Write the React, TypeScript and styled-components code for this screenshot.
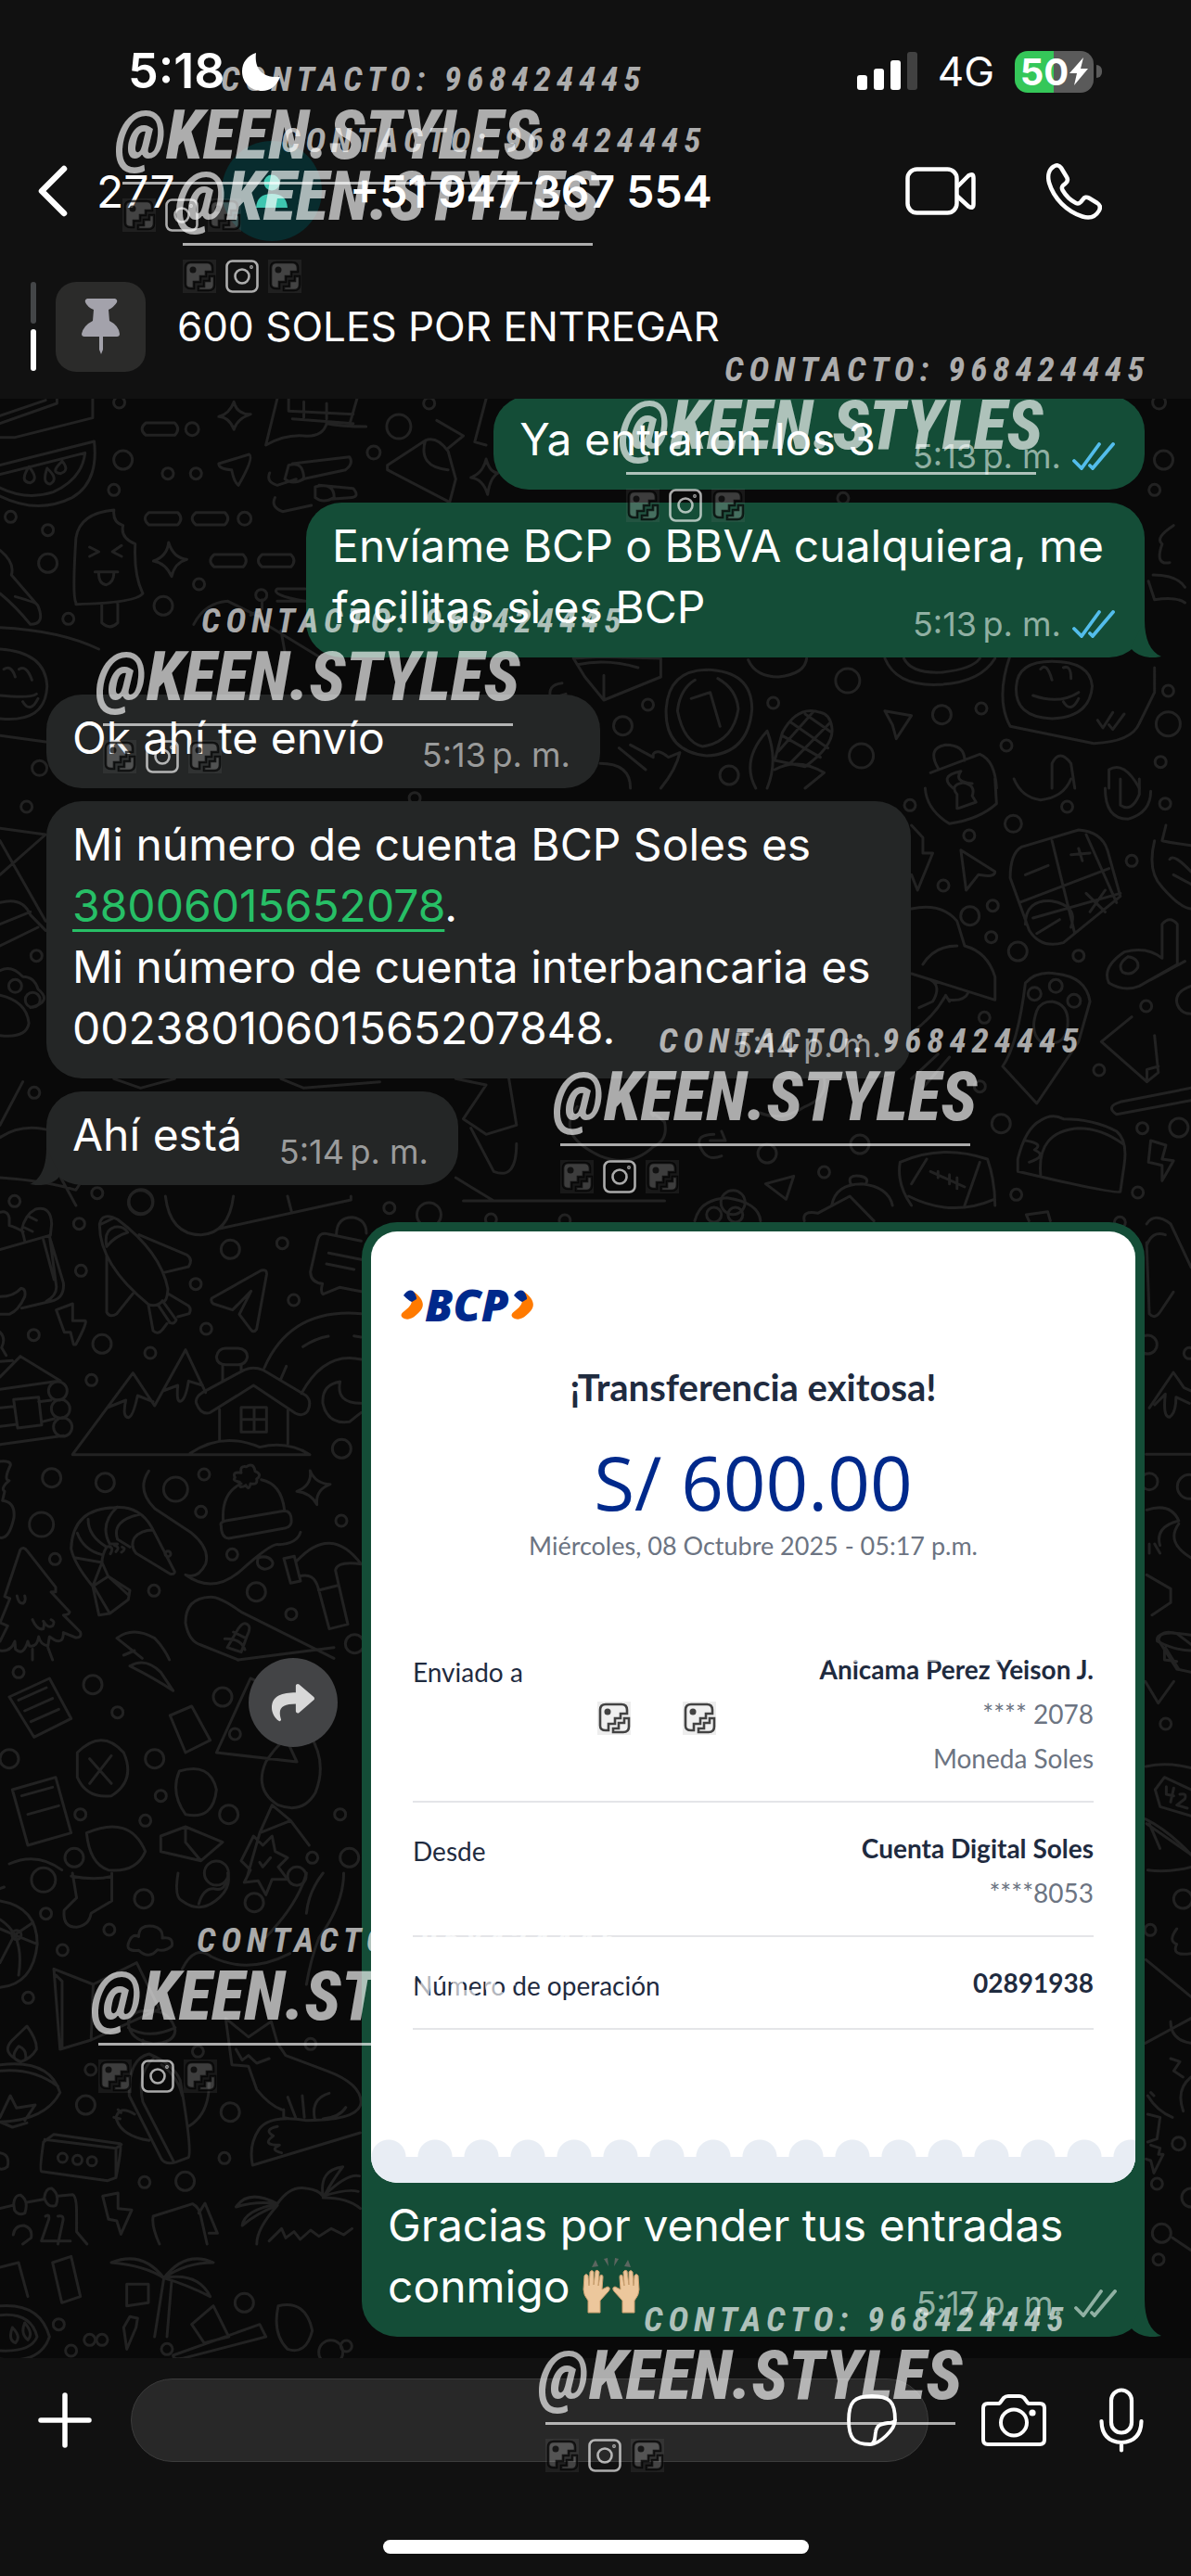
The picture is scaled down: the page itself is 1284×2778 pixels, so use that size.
import React from "react";
import styled, { createGlobalStyle } from "styled-components";
import { FaShare } from "react-icons/fa";

const ui = `Inter, "Liberation Sans", sans-serif`;
const receiptFont = `Lato, "Open Sans", sans-serif`;
const stampFont = `"Roboto Condensed", "Liberation Sans Narrow", "DejaVu Sans Condensed", sans-serif`;

const Global = createGlobalStyle`
  * { box-sizing: border-box; }
  body { margin: 0; background: #111; }
  button, input { font: inherit; color: inherit; background: none; border: 0; padding: 0; }
  svg { display: block; }
`;

const Screen = styled.main`
  position: relative;
  display: flex;
  flex-direction: column;
  width: 100%;
  height: 100vh;
  overflow: hidden;
  background: #111;
  color: #fff;
  font-family: ${ui};
`;

/* ---------- status bar ---------- */
const StatusBar = styled.header`
  display: flex;
  align-items: center;
  padding: 46px 96px 0 138px;
  height: 108px;
`;
const Clock = styled.time`
  font-size: 52px;
  font-weight: 600;
  line-height: 64px;
`;
const Moon = styled.svg`
  margin-left: 18px;
`;
const StatusRight = styled.div`
  display: flex;
  align-items: center;
  gap: 22px;
  margin-left: auto;
`;
const Network = styled.span`
  font-size: 44px;
  line-height: 60px;
`;
const Battery = styled.span`
  display: flex;
  align-items: center;
  gap: 3px;
`;
const BatteryBody = styled.span`
  display: flex;
  align-items: center;
  justify-content: center;
  gap: 1px;
  width: 85px;
  height: 45px;
  border-radius: 14px;
  background: linear-gradient(90deg, #35c759 50%, #5a5a5a 50%);
  font-size: 40px;
  font-weight: 700;
`;
const BatteryTip = styled.span`
  width: 6px;
  height: 14px;
  border-radius: 0 7px 7px 0;
  background: #5a5a5a;
`;

/* ---------- contact bar ---------- */
const ContactBar = styled.nav`
  display: flex;
  align-items: center;
  height: 196px;
  padding: 0 96px 0 41px;
`;
const BackButton = styled.button`
  display: flex;
  align-items: center;
  gap: 31px;
  width: 198px;
  font-size: 48px;
`;
const Avatar = styled.span`
  display: grid;
  place-items: center;
  width: 108px;
  height: 108px;
  border-radius: 50%;
  background: #082c2e;
`;
const Contact = styled.h1`
  flex: 1;
  margin: 0 0 0 30px;
  font-size: 48px;
  font-weight: 600;
`;
const IconButton = styled.button`
  display: grid;
  place-items: center;
  flex: none;
`;
const Calls = styled.div`
  display: flex;
  align-items: center;
  gap: 76px;
`;

/* ---------- pinned message ---------- */
const Pinned = styled.section`
  display: flex;
  align-items: center;
  height: 126px;
  padding: 0 33px 30px;
`;
const PinSteps = styled.div`
  display: grid;
  gap: 6px;
`;
const PinStep = styled.span<{ $on?: boolean }>`
  width: 6px;
  height: 45px;
  border-radius: 3px;
  background: ${(p) => (p.$on ? "#fff" : "#444648")};
`;
const PinTile = styled.span`
  display: grid;
  place-items: center;
  width: 97px;
  height: 97px;
  margin: 0 34px 0 21px;
  border-radius: 22px;
  background: #2b2b2a;
`;
const PinText = styled.p`
  margin: 0;
  font-size: 44px;
`;

/* ---------- conversation ---------- */
const Chat = styled.section`
  position: relative;
  flex: 1;
  min-height: 0;
  display: flex;
  flex-direction: column;
  justify-content: flex-end;
  gap: 14px;
  padding: 0 50px 23px;
  overflow: hidden;
  background: #090909;
`;
const Wallpaper = styled.svg`
  position: absolute;
  inset: 0;
  width: 100%;
  height: 100%;
  fill: none;
  stroke: #222;
  stroke-width: 3;
  stroke-linejoin: round;
  stroke-linecap: round;
  & * { vector-effect: non-scaling-stroke; }
`;
const Row = styled.div<{ $mine?: boolean; $turn?: boolean }>`
  position: relative;
  display: flex;
  justify-content: ${(p) => (p.$mine ? "flex-end" : "flex-start")};
  margin-top: ${(p) => (p.$turn ? "26px" : "0")};
`;
const Bubble = styled.article<{ $mine?: boolean; $stacked?: boolean }>`
  position: relative;
  display: ${(p) => (p.$stacked ? "grid" : "flex")};
  gap: 40px;
  padding: 14px 32px 21px 28px;
  border-radius: 38px;
  background: ${(p) => (p.$mine ? "#144d37" : "#242626")};
`;
const MediaBubble = styled.article`
  position: relative;
  width: 844px;
  padding: 10px;
  border-radius: 38px;
  background: #144d37;
`;
const Caption = styled.div`
  display: grid;
  padding: 13px 20px 11px 18px;
`;
const Body = styled.p<{ $stacked?: boolean }>`
  margin: 0;
  grid-area: 1 / 1;
  padding-right: ${(p) => (p.$stacked ? "12px" : "0")};
  font-size: 48px;
  line-height: 66px;
  white-space: pre-line;
`;
const AccountLink = styled.a`
  color: #27bf66;
  text-decoration: underline;
  text-decoration-thickness: 3px;
  text-underline-offset: 8px;
`;
const Meta = styled.span<{ $mine?: boolean }>`
  grid-area: 1 / 1;
  align-self: end;
  justify-self: end;
  display: flex;
  align-items: center;
  gap: 12px;
  font-size: 36px;
  line-height: 42px;
  white-space: nowrap;
  margin-bottom: -6px;
  color: ${(p) => (p.$mine ? "#90b0a3" : "#9a9b9b")};
`;
const RightTail = styled.svg`
  position: absolute;
  right: -18px;
  bottom: 0;
`;
const LeftTail = styled.svg`
  position: absolute;
  left: -18px;
  bottom: 0;
`;
const Share = styled.button`
  display: grid;
  place-items: center;
  width: 96px;
  height: 96px;
  margin: 470px 26px 0 0;
  border-radius: 50%;
  background: #434446;
  color: #d8d8d8;
  font-size: 46px;
`;

/* ---------- bank receipt ---------- */
const Receipt = styled.div`
  display: flex;
  flex-direction: column;
  height: 1026px;
  border-radius: 28px;
  overflow: hidden;
  background: #fff;
  color: #1f2b3f;
  font-family: ${receiptFont};
`;
const Logo = styled.div`
  display: flex;
  align-items: center;
  gap: 2px;
  padding: 59px 0 0 32px;
  color: #00298b;
  font: italic 800 48px/40px "Open Sans", sans-serif;
`;
const ReceiptTitle = styled.h2`
  margin: 47px 0 0;
  text-align: center;
  font-size: 40px;
  font-weight: 700;
  line-height: 44px;
`;
const Amount = styled.p`
  margin: 36px 0 0;
  text-align: center;
  color: #00298b;
  font: 400 80px/88px "Open Sans", sans-serif;
`;
const ReceiptDate = styled.p`
  margin: 7px 0 0;
  text-align: center;
  color: #6c7482;
  font-size: 27px;
  line-height: 36px;
`;
const Details = styled.dl`
  margin: 97px 45px 0;
`;
const Detail = styled.div`
  display: flex;
  justify-content: space-between;
  padding-bottom: 28px;
  margin-bottom: 31px;
  border-bottom: 2px solid #e4e5e8;
  font-size: 28px;
  line-height: 36px;
`;
const Term = styled.dt`
  padding-top: 3px;
`;
const Values = styled.dd`
  display: grid;
  gap: 12px;
  margin: 0;
  text-align: right;
  color: #6c7482;
  & > b { color: #1f2b3f; }
`;
const Scallops = styled.div`
  height: 47px;
  margin-top: auto;
  background:
    linear-gradient(#e8edf4, #e8edf4) 0 19px / 100% 28px no-repeat,
    radial-gradient(circle at 19px 19px, #e8edf4 18px, transparent 19px) 0 0 / 50px 38px repeat-x;
`;
const Emoji = styled.svg`
  display: inline-block;
  vertical-align: -12px;
`;

/* ---------- composer ---------- */
const Composer = styled.form`
  display: flex;
  align-items: center;
  padding: 22px 51px 0 41px;
`;
const Field = styled.label`
  display: flex;
  align-items: center;
  flex: 1;
  min-width: 0;
  height: 90px;
  margin: 0 57px 0 42px;
  padding: 0 33px 0 36px;
  border: 1px solid #3c3c3c;
  border-radius: 45px;
  background: #282828;
`;
const Input = styled.input`
  flex: 1;
  width: 100%;
  min-width: 0;
  outline: 0;
  font-size: 48px;
`;
const Tools = styled.div`
  display: flex;
  align-items: center;
  gap: 57px;
`;
const HomeBar = styled.div`
  width: 459px;
  height: 15px;
  margin: 84px auto 24px;
  border-radius: 8px;
  background: #fff;
`;

/* ---------- seller's stamps, scattered freely over the screen ---------- */
const StampLayer = styled.div`
  position: absolute;
  inset: 0;
  overflow: hidden;
  pointer-events: none;
`;
const StampBox = styled.div`
  position: absolute;
  width: 442px;
  color: rgba(255, 255, 255, 0.66);
  font-family: ${stampFont};
  font-style: italic;
  font-weight: 700;
  white-space: nowrap;
`;
const StampContact = styled.div`
  margin-left: 106px;
  font-size: 37px;
  line-height: 40px;
  letter-spacing: 6px;
`;
const StampName = styled.div`
  margin-left: -8px;
  font-size: 74px;
  font-weight: 800;
  line-height: 80px;
`;
const StampRule = styled.div`
  height: 3px;
  margin-top: 10px;
  background: rgba(255, 255, 255, 0.66);
`;
const StampIcons = styled.div`
  display: flex;
  gap: 10px;
  margin-top: 15px;
`;

const Broken = () => (
  <svg width="36" height="36" viewBox="0 0 36 36" fill="none">
    <rect width="36" height="36" fill="rgba(128,128,128,.14)" />
    <path
      d="M11 31H9Q3 31 3 26V9Q3 3 9 3H26Q32 3 32 9V13H25V18H19V24H12V31ZM17 33V29H23V23H29V18H34V27Q34 33 28 33Z"
      fill="rgba(255,255,255,.16)"
      stroke="rgba(0,0,0,.72)"
      strokeWidth="2.6"
    />
    <circle cx="11" cy="11" r="3.5" fill="rgba(0,0,0,.72)" />
  </svg>
);
const Camera = () => (
  <svg width="36" height="36" viewBox="0 0 36 36" fill="none" stroke="rgba(255,255,255,.66)" strokeWidth="2.6">
    <rect x="1.5" y="1.5" width="33" height="33" rx="6" />
    <circle cx="18" cy="18" r="7.5" />
    <circle cx="28" cy="8" r=".6" />
  </svg>
);
const Stamp = ({ x, y }: { x: number; y: number }) => (
  <StampBox style={{ left: x, top: y - 131 }}>
    <StampContact>CONTACTO: 968424445</StampContact>
    <StampName>@KEEN.STYLES</StampName>
    <StampRule />
    <StampIcons>
      <Broken />
      <Camera />
      <Broken />
    </StampIcons>
  </StampBox>
);
const stamps: [number, number][] = [
  [132, 197],
  [197, 263],
  [675, 510],
  [111, 781],
  [604, 1234],
  [644, 1818],
  [106, 2204],
  [588, 2613],
];

const Ticks = ({ read }: { read?: boolean }) => (
  <svg width="46" height="30" viewBox="0 0 46 30" fill="none" stroke={read ? "#53bdeb" : "#90b0a3"} strokeWidth="3.8" strokeLinecap="round">
    <path d="M2 20L10 28L29 2" />
    <path d="M19 25L22 28L44 2" />
  </svg>
);
const TailR = () => (
  <RightTail width="36" height="40" viewBox="0 0 36 40" fill="#144d37">
    <path d="M18 0C18 20 24 34 36 39C24 42 10 39 3 30Z" />
  </RightTail>
);
const TailL = () => (
  <LeftTail width="36" height="40" viewBox="0 0 36 40" fill="#242626">
    <path d="M18 0C18 20 12 34 0 39C12 42 26 39 33 30Z" />
  </LeftTail>
);
const Chevron = () => (
  <svg width="24" height="32" viewBox="0 0 24 32">
    <path d="M14 2C25 10 27 18 19 25C14 30 8 34 2 30C-1 27 1 25 5 22C10 18 12 15 12 11Z" fill="#ff7a00" />
    <path d="M3 6Q8 -1 13 1Q17 5 17 10L12 13Q9 12 3 6Z" fill="#00298b" />
  </svg>
);

/* ---------- wallpaper drawings ---------- */
type Patch = { x: number; y: number; kx: number; ky: number; d: string; dots: [number, number, number][] };
const patches: Patch[] = [
  {
    x: 0, y: 420, kx: 1.2212, ky: 3,
    d: `M0 155H20L122 92V30M0 110L75 45V30M0 85L60 35
    M0 245L124 168Q130 300 95 350Q50 405 0 345M0 275L112 205Q108 290 70 332Q35 360 0 318
    M38 250Q25 300 40 302Q52 290 38 250M62 255Q55 305 66 306Q78 290 62 255M82 232Q65 270 80 272Q92 262 82 232
    M192 108H230Q238 128 230 148H192Q182 128 192 108Z
    M196 398H234Q242 418 234 438H196Q186 418 196 398ZM258 398H296Q304 418 296 438H258Q248 418 258 398Z
    M282 534H320Q328 554 320 574H282Q272 554 282 534ZM345 534H383Q391 554 383 574H345Q335 554 345 534ZM365 645H402M365 685H402Q355 665 365 645
    M308 40Q312 82 330 80Q312 95 308 130Q302 90 288 88Q302 80 308 40ZM222 495Q228 545 246 550Q230 560 226 605Q218 562 202 555Q220 540 222 495Z
    M640 225Q645 270 656 270Q645 285 642 340Q636 290 620 285Q636 270 640 225Z
    M365 30L350 180Q375 145 400 150T430 110Q450 120 482 120M470 30L460 115M380 30V70L465 80M385 95L465 110M400 40V90M430 45V95
    M288 240L328 210Q335 220 314 310Q308 300 305 260Q288 258 288 240Z
    M355 270Q350 300 365 310L390 290M385 240L460 218Q466 240 455 260L398 290M380 245Q400 230 400 290Q385 310 375 290ZM362 350Q356 380 372 395L410 375M420 310L465 320Q475 350 460 350L435 355M415 315Q440 300 440 350Q425 370 415 350Z
    M510 245L560 165Q575 150 590 200L600 290L592 365L510 260ZM560 165Q550 250 590 260M575 100L610 150L590 190M640 30L625 170L640 180
    M100 690Q95 670 100 480Q105 400 150 390Q148 430 162 440Q158 480 178 500Q176 600 188 660Q180 690 100 695ZM134 695V755Q145 780 155 755V692M118 510L130 525L118 540M160 505L148 525L160 540M125 590H155M130 595Q130 630 140 632Q150 625 150 592
    M0 520Q20 560 15 600L50 700Q60 760 40 760Q20 700 0 660M20 670Q50 690 50 700
    M0 770Q80 780 130 840M0 840Q60 850 62 960Q60 1080 0 1065M0 1120L60 1140M5 905Q15 890 20 930M25 905Q35 890 42 940M0 990Q40 1000 48 985M30 1010Q40 1050 50 1000
    M255 760Q270 690 300 685L345 740M345 680V710L330 730M350 760L420 865M370 780L375 850M755 870L790 865L870 870V930L795 1005L770 930ZM795 925V1000M760 890Q800 870 840 900M740 950Q720 955 725 1000L745 985
    M930 907Q990 910 990 1035Q985 1180 930 1185Q875 1170 877 1035Q880 910 930 907ZM945 935Q970 970 972 1035Q965 1140 925 1155Q900 1140 892 1040Q895 970 915 940M910 1000L935 980L948 1090
    M1010 1105Q1025 1200 1010 1290M1010 1105Q975 1200 995 1290M1080 1045Q1050 1020 1030 1110L1020 1200L1060 1220Q1100 1150 1095 1090Q1092 1050 1080 1045M1040 1075L1090 1160M1030 1120L1080 1190M1060 1050L1095 1110M1070 1045L1025 1170M1092 1080L1040 1210M1020 1230Q1050 1190 1085 1240L1060 1290
    M1165 1040L1200 1055L1180 1130L1175 1085ZM985 875Q995 930 1025 930Q1060 920 1062 870M1165 870Q1180 960 1235 955Q1290 950 1310 870M1190 870Q1200 920 1240 915Q1280 905 1290 870
    M1330 860Q1310 1000 1330 1090L1440 1145Q1490 1140 1500 1080L1520 980V900M1385 880Q1435 880 1438 960Q1435 1060 1385 1065Q1335 1060 1338 960Q1340 880 1385 880M1370 905Q1378 880 1385 940M1400 900Q1410 890 1410 935M1360 990Q1395 1020 1420 980M1400 1010Q1410 1050 1420 1000M1445 1070L1452 1095L1465 1045M1460 1085L1465 1100L1480 1050
    M815 1160L850 1230M830 1150L860 1190V1180Q865 1160 880 1190L895 1175Q890 1230 870 1290M790 1210Q830 1210 830 1290M1225 1240L1290 1180Q1310 1200 1312 1290M1235 1225Q1220 1160 1245 1150Q1270 1150 1270 1200M1255 1290Q1235 1250 1265 1235Q1255 1270 1280 1275M1385 1290V1210Q1395 1160 1410 1210L1415 1290M1460 1290V1230Q1480 1200 1500 1290
    M1545 440Q1520 480 1530 500Q1520 570 1540 560M1518 600Q1550 600 1560 640M1512 620L1520 680Q1550 670 1560 690`,
    dots: [[157, 42, 6], [253, 128, 7], [162, 228, 10], [221, 272, 6], [258, 272, 6], [150, 325, 6], [14, 412, 6], [322, 418, 7], [63, 455, 6], [63, 562, 10], [262, 630, 6], [344, 665, 6], [215, 700, 10], [90, 742, 6], [492, 204, 7], [525, 120, 13], [565, 45, 6], [1526, 42, 7], [1532, 228, 10], [1520, 325, 6], [1110, 352, 6], [1116, 942, 13], [853, 1020, 6], [820, 1088, 10], [1018, 1014, 6], [1240, 1052, 10], [1292, 1032, 6], [960, 1248, 10], [1134, 1185, 13], [1325, 1152, 6], [1538, 975, 6], [1538, 1082, 13], [1528, 1205, 6], [52, 1225, 8]],
  },
  {
    x: 0, y: 840, kx: 1.2212, ky: 3,
    d: `M1218 30Q1220 100 1250 145Q1290 130 1312 80L1310 0M1260 95V50Q1250 20 1268 12Q1285 20 1280 55L1285 75L1262 95M1335 0Q1345 60 1370 68Q1400 60 1410 0M1455 30Q1455 130 1485 130Q1515 110 1515 40M1475 0V85Q1490 110 1500 50V0
    M1345 220L1420 165Q1450 170 1458 230L1475 380L1400 530Q1370 550 1355 490L1330 320Q1330 240 1345 220M1385 200L1415 500M1430 180L1470 400M1342 400L1460 290M1360 450L1475 370M1350 310L1380 280M1410 245L1435 240M1420 225L1425 265M1430 370L1455 430M1455 360L1435 430M1365 500L1395 455M1350 470Q1350 390 1385 395Q1420 410 1410 480
    M1200 150L1215 190V240H1228L1208 360L1200 310M1265 230L1310 300Q1310 320 1288 310L1272 360ZM1520 200Q1510 300 1530 350Q1555 420 1568 420M1535 150L1530 200Q1550 210 1568 215M1540 260Q1545 240 1568 300M1545 310Q1560 330 1568 340
    M1200 420Q1240 400 1260 460L1270 540Q1300 560 1310 640V715L1200 630M1215 600Q1230 540 1260 540M1210 740L1228 720Q1240 670 1225 650M1250 715Q1270 720 1275 690M1200 820Q1230 770 1245 700L1250 720
    M1530 470Q1540 440 1550 470V600L1500 670Q1480 690 1460 660Q1450 610 1480 560Q1510 540 1530 580ZM1485 575Q1500 580 1498 610Q1490 640 1478 625Q1470 600 1485 575M1560 590L1515 650M1568 670Q1545 690 1550 730Q1555 760 1568 760
    M1350 660Q1365 620 1390 630Q1430 640 1435 720L1420 850L1365 1050L1320 930Q1340 860 1350 660M1385 720Q1410 730 1405 810Q1400 870 1370 850Q1355 820 1365 750Q1370 720 1385 720
    M1490 770L1450 850L1510 980L1525 950L1520 830M1510 980V940L1525 930M1568 1000L1475 1045Q1455 1060 1470 1085L1568 1040
    M1340 1230Q1350 1130 1370 1105Q1385 1080 1400 1100Q1440 1100 1470 1140Q1485 1170 1480 1250L1475 1335Q1470 1345 1340 1270ZM1370 1280Q1365 1140 1420 1130Q1450 1130 1478 1180M1350 1170Q1375 1180 1362 1200Q1380 1220 1355 1240
    M1515 1170L1535 1185L1530 1230L1545 1235L1530 1300V1250L1512 1240Z
    M1185 1240Q1240 1180 1300 1230Q1310 1300 1310 1380M1185 1240Q1180 1310 1200 1380M1220 1230L1200 1310M1290 1240L1270 1380M1225 1270L1270 1320M1235 1290V1270M1250 1310V1280M1260 1325V1290
    M0 160L60 180M0 200L60 460M0 310L60 180M0 400Q30 380 40 440L60 490M0 470L40 430M0 540L50 480M0 620Q15 600 30 640Q45 640 50 680Q70 720 40 740M0 700Q35 720 38 790Q35 840 0 830M30 980L0 1120M0 1160Q30 1110 70 1140M0 1290Q60 1300 100 1330L105 1310M80 1290L100 1380
    M150 970L185 1000L230 970M370 970L400 1000L500 980M600 970L640 990L610 1100L640 1150L680 1120L670 970M620 1130L650 1270Q680 1300 680 1180M610 1365H875M600 1290L650 1365M760 1060Q730 1150 790 1220Q830 1260 860 1190Q880 1170 875 1110Q850 1060 860 1090M940 1150Q915 1150 922 1190Q930 1240 950 1220M950 1140L955 1170L935 1170M1000 1080Q1030 1110 1060 1060Q1090 1030 1085 970
    M1008 1310L1045 1285L1035 1360ZM1095 1380Q1100 1310 1135 1310Q1170 1320 1175 1380M1120 1310Q1115 1280 1132 1285Q1145 1290 1140 1310M1200 970L1235 890M1215 1000L1250 900`,
    dots: [[35, 90, 6], [48, 572, 6], [43, 715, 8], [20, 670, 7], [45, 1015, 6], [128, 1340, 6], [185, 1370, 13], [546, 62, 6], [1198, 85, 6], [1405, 90, 6], [1534, 80, 6], [1334, 145, 9], [1276, 183, 6], [1490, 265, 6], [1242, 345, 6], [1307, 410, 6], [1277, 443, 10], [1305, 512, 6], [1340, 558, 10], [1420, 572, 6], [1509, 735, 6], [1296, 772, 6], [1362, 695, 7], [1390, 670, 7], [1414, 718, 7], [1447, 942, 6], [1290, 995, 6], [1318, 1115, 10], [1504, 1130, 6], [1552, 1128, 10], [1010, 1212, 10], [1132, 1182, 10], [1085, 1272, 6], [1338, 1345, 6], [1498, 1338, 6], [965, 1370, 13]],
  },
  {
    x: 0, y: 1290, kx: 3, ky: 3,
    d: `M0 173L160 127L182 290Q185 320 150 340M140 140L175 270M160 130L205 280Q210 330 165 340L70 362M80 145Q75 120 70 110Q80 60 115 42Q165 30 167 90L163 127M92 65L118 78M80 102L105 114M75 115Q50 100 30 95V70Q25 45 0 52M0 325Q45 325 68 298Q85 300 80 325Q60 370 30 382H0
    M182 368L235 348V403H275Q285 405 245 480H238L228 440H208ZM322 90Q330 50 380 75Q520 180 543 300Q540 345 525 340Q505 360 480 350Q320 220 322 90ZM345 163Q335 110 370 100Q400 95 413 117Q370 130 345 163M328 90L365 72M345 190V375Q355 395 378 380L430 315M450 125L605 190Q625 205 610 228L527 248M543 315L610 355Q620 365 612 380L575 390M480 352L495 435Q510 450 525 432L540 412M510 350L550 410Q565 415 570 400L525 338
    M685 330L845 240Q865 235 862 255L830 430Q820 445 810 430L774 382L812 307L752 368L690 348Q680 340 685 330ZM535 0Q550 125 650 125Q740 120 755 0M710 105L1135 12V0M930 0L943 50
    M1168 145L1060 122Q1035 115 1028 140L1004 245Q1005 280 1043 283Q1035 310 1045 317L1098 295L1168 308M1088 122Q1090 68 1140 68Q1185 75 1185 120M1063 184L1168 205M1056 219L1145 237M855 555Q940 360 1168 380M975 638Q1050 500 1168 528M980 487Q1020 460 1062 453M908 592L926 550M1145 452L1168 456
    M235 835L430 572L500 678L600 497L665 635M347 684L407 660Q395 715 415 716Q430 715 445 645L495 665M527 630L575 612Q570 665 583 664Q600 660 610 598L655 612M235 836H1002Q930 790 840 812Q720 760 615 832M710 690V790M931 690V800M700 520Q705 492 730 492H770Q800 495 800 520Q795 545 770 545H730Q702 545 700 520ZM720 547V600M780 547V565M635 670Q630 650 655 635L790 562Q820 550 850 562L990 645Q1010 665 995 695Q980 715 955 702L820 612L680 700Q650 710 635 670M780 683H862V763H780ZM822 683V763M780 722H862
    M1100 600Q1040 610 1044 670Q1060 740 1130 730L1168 700M1100 600Q1085 670 1168 670M0 585L66 518L195 597L0 625M0 535L40 532M44 658L125 650L135 740L57 750ZM125 665L165 660M0 685L44 680M0 745L55 738M135 730L175 720M0 803L205 775M0 440Q20 460 5 490L20 515
    M0 858Q35 855 34 870Q10 920 30 920Q0 945 15 955L8 985Q50 990 45 1040Q30 1110 0 1105
    M481 889Q440 950 500 1010L620 1090Q680 1140 665 1190Q640 1240 600 1225Q690 1290 780 1210Q880 1120 900 1127Q960 1125 972 1087M835 1170Q825 1200 855 1207Q890 1200 880 1180Q865 1160 835 1170
    M230 1140Q235 1010 370 1007Q450 1000 490 1070L565 1215Q565 1225 550 1222L440 1155Q420 1130 435 1105Q455 1080 495 1080M230 1140Q240 1190 300 1262L330 1185Q330 1160 345 1135Q285 1100 285 1045M245 1170L330 1185M250 1090Q270 1145 330 1160M380 1005Q320 1060 355 1125H380M450 1030Q360 1050 380 1110L420 1135M330 1185L350 1230L300 1262L320 1355L355 1350L305 1265M355 1350L415 1305L420 1275L350 1230L415 1290M350 1133Q370 1135 357 1157M370 1130Q390 1135 375 1150M395 1135Q410 1140 393 1152
    M722 1052Q715 960 780 930M845 917Q910 930 920 1015M715 1065Q710 1055 730 1050L920 1018Q945 1020 942 1055Q940 1068 925 1073L740 1107Q715 1105 715 1065ZM760 910Q750 890 780 895Q775 870 797 875Q820 860 825 890Q850 900 830 915Q835 935 810 930Q805 955 795 935Q770 950 775 925Q750 920 760 910
    M1003 888Q1020 930 1068 932Q1020 950 1025 998Q1005 960 960 955Q1010 935 1003 888M918 1172L952 1165L972 1245L940 1252ZM960 1180Q1070 1060 1168 1190Q1090 1180 1085 1210L1095 1255L1125 1385L1065 1400L1030 1270Q1015 1215 968 1230M1030 1275L1090 1260
    M65 1145Q75 1130 90 1150L180 1265V1280H165L225 1345Q225 1355 205 1355L260 1410Q265 1430 245 1428L205 1412Q205 1450 175 1435L160 1425L155 1455Q130 1450 125 1425Q120 1460 95 1455L90 1440Q75 1490 50 1465L48 1440Q35 1475 0 1470M65 1145L15 1295L32 1302L0 1380L25 1390L0 1440M105 1465V1500M155 1460L170 1500M55 1293Q60 1320 75 1317Q85 1310 80 1293M105 1370Q120 1405 140 1400Q145 1380 140 1375Q155 1400 170 1390Q180 1375 165 1370
    M600 1380Q600 1300 680 1297Q710 1295 780 1345L1080 1495M600 1380Q610 1440 650 1452L770 1500M770 1400Q790 1370 805 1390Q810 1400 800 1420L780 1475L735 1460ZM727 1432Q780 1430 792 1467M755 1410L795 1430M378 1430Q430 1390 500 1430Q530 1460 548 1500M378 1430L460 1495M400 1485L435 1470`,
    dots: [[47, 16, 6], [456, 17, 13], [256, 89, 6], [745, 172, 10], [913, 152, 6], [262, 241, 6], [633, 284, 6], [950, 336, 6], [667, 429, 6], [109, 449, 6], [330, 478, 10], [486, 507, 6], [296, 595, 6], [187, 630, 10], [196, 688, 10], [203, 747, 10], [1105, 817, 10], [167, 911, 10], [340, 926, 10], [660, 900, 6], [568, 948, 13], [650, 1021, 6], [1104, 1050, 6], [134, 1062, 13], [751, 1159, 6], [178, 1174, 6], [498, 1276, 6], [829, 1280, 10], [942, 1352, 6], [1147, 1448, 10], [543, 1157, 3]],
  },
  {
    x: 0, y: 1790, kx: 3, ky: 3,
    d: `M420 20Q470 -10 520 40L560 100Q500 60 420 20M770 0L1080 -40M810 60Q900 90 900 200L960 330L700 300ZM860 330Q820 420 900 470Q980 500 1020 430Q1060 330 1000 240Q930 220 860 330M940 260L1010 180M900 240Q930 260 940 250M880 470L840 560L940 520ZM840 560L800 700M940 520L1000 600
    M30 120L160 60L230 190L110 250ZM60 130L150 90M80 165L170 125M100 200L190 160M250 300Q330 220 400 300Q440 390 360 440Q280 450 250 380ZM290 320L360 400M360 310L290 400M40 420L180 380L230 560L90 600ZM70 440L170 412M90 500L190 472M280 560Q420 500 470 620Q440 690 350 680Q290 660 280 560M550 180L620 150L680 260L600 300ZM580 360Q680 330 700 420Q690 520 600 500Q550 430 580 360M30 660Q120 620 200 680
    M795 620L820 570L850 600L880 570L890 620L930 640L900 670L930 710L880 710L860 760L835 715L790 720L810 680L780 650ZM840 655L850 670L875 640M520 570L600 540L720 590L650 650L520 620ZM520 570V620M600 540V590M600 590L650 650`,
    dots: [[60, 40, 6], [300, 80, 10], [380, 170, 6], [720, 120, 10], [760, 240, 6], [500, 320, 10], [520, 440, 6], [30, 320, 10], [740, 500, 10], [470, 520, 6], [260, 500, 6], [960, 700, 10], [1010, 640, 6], [1130, 640, 10], [1100, 500, 6], [700, 690, 13], [240, 640, 10]],
  },
  {
    x: 0, y: 2020, kx: 2.24, ky: 3,
    d: `M175 0L185 80L155 120Q150 175 185 175Q215 170 220 130L270 90V0M172 10Q230 25 270 10M430 0Q420 80 440 90Q480 130 520 90Q560 50 550 0M480 100Q490 50 515 50Q540 60 545 30M0 90Q90 110 90 230Q80 360 0 370M0 150Q60 200 45 330M0 180L35 200L80 160M35 200L0 290M35 200L90 230M0 50L10 45
    M335 250Q300 255 312 220Q320 195 335 205Q335 165 370 172Q395 180 392 210Q420 205 415 235Q400 255 380 248Q360 280 335 250ZM640 210Q720 100 740 0M830 0Q830 100 770 210Q750 280 740 360M740 130Q745 60 780 0M440 310Q470 230 510 270Q600 330 700 260
    M130 310L225 360L330 290L385 440L220 540L145 570ZM135 330L150 350L150 560M225 360L220 540M50 610Q0 580 30 540L65 495Q90 540 88 570Q75 600 50 610ZM50 610Q20 600 45 560Q65 570 62 600M0 620Q120 600 145 710Q110 800 0 805M0 640Q80 630 140 690M0 790L25 720L40 760L85 750L60 800M0 805L30 822L65 808
    M310 480Q320 440 365 445Q415 450 423 510Q420 550 370 552Q310 540 310 480ZM310 500Q360 540 423 500M345 540V552M545 470L560 620L600 625L620 700Q650 750 680 765M545 470L600 530L655 480L670 550L690 590L790 640Q870 680 872 740Q870 800 740 800Q650 780 625 830Q600 880 610 945L870 840M570 570L585 605L600 590L620 615L650 600M660 850Q635 830 670 820M660 850Q630 880 675 880Q650 895 680 905M760 795Q750 730 795 712M780 795Q820 790 835 758M695 725L715 795M730 720L735 790M685 765V790L700 795
    M360 585Q310 600 312 720L390 925Q400 945 425 935L455 920Q465 900 435 670Q420 620 360 585ZM370 600Q330 650 345 740L420 935M390 620Q430 660 440 720M325 780Q290 750 280 790Q290 850 360 865M275 790L290 795M285 765L292 775M505 680Q505 780 455 820
    M105 870L130 845L290 875Q295 885 280 985L260 995L100 965Q95 960 105 870ZM108 862L280 890V985M280 890L293 878M0 905Q25 910 18 950Q10 960 0 957
    M0 1085L30 1075M65 1065L105 1055M140 1045L175 1040Q185 1045 185 1100V1160L210 1200M33 1070Q35 1040 50 1042Q70 1060 60 1100Q45 1110 35 1090ZM107 1050Q110 1018 125 1020Q145 1040 135 1075Q115 1085 107 1050Z
    M32 1170Q35 1140 58 1140Q80 1150 75 1180L55 1200M110 1110Q120 1100 118 1120L100 1190H170M140 1110Q155 1105 152 1125L140 1200
    M248 1045L285 1035V1085L318 1090L292 1168L282 1125L262 1120ZM370 1110L465 1070Q480 1080 485 1110L500 1200M370 1110Q365 1140 385 1200M480 1100L495 1068L525 1165L505 1165
    M570 1080Q600 1020 670 1070Q700 1010 740 1020Q770 1025 780 1045Q840 1020 865 1030M780 1045Q770 960 828 950Q800 1000 785 1040Q840 970 868 980M570 1080Q620 1060 670 1070Q590 1090 585 1140Q620 1100 670 1075Q620 1150 620 1200M780 1050Q840 1050 870 1085M650 1190L680 1150L690 1180L710 1160L725 1185L750 1155L770 1175L800 1150L830 1170L850 1150`,
    dots: [[105, 22, 13], [347, 83, 10], [614, 95, 10], [111, 131, 6], [264, 183, 6], [151, 249, 6], [68, 403, 6], [219, 636, 6], [478, 577, 6], [207, 750, 10], [556, 773, 10], [542, 922, 6], [349, 1000, 6], [447, 997, 10], [151, 921, 5], [187, 928, 5], [222, 932, 5], [750, 553, 6], [40, 200, 5]],
  },
  {
    x: 0, y: 2420, kx: 3, ky: 3,
    d: `M0 75L60 60L90 170M0 200Q130 190 160 300Q130 390 0 372M0 230Q100 220 120 300Q100 350 0 345M40 270Q70 300 50 320Q25 310 40 270M80 255Q110 290 90 310Q65 290 80 255M360 60Q460 20 530 110Q470 70 360 60M530 110Q600 20 690 60Q600 60 530 110Q640 90 680 170Q600 130 530 110L500 300M555 120L540 300M410 130H480V190L410 200ZM170 60L230 40L260 170L200 190ZM400 270L420 235L445 240L440 270L410 340ZM560 360L840 260L860 300L590 370Q560 375 560 360ZM620 260L690 200L740 300L660 320ZM900 200Q990 180 1010 280Q990 360 930 340Q880 290 900 200`,
    dots: [[190, 260, 6], [290, 310, 6], [330, 310, 6], [230, 345, 6], [540, 340, 6], [790, 190, 10], [1070, 350, 13], [1120, 330, 6]],
  },
  {
    x: 380, y: 1300, kx: 1.7345, ky: 3,
    d: `M640 50Q650 -20 700 -25Q760 -10 763 50M845 50Q840 15 870 25L930 -30L975 50M1040 -30Q1120 40 1200 -20M1265 50L1260 30L1300 20L1305 50M1485 60Q1500 20 1530 60L1568 200M1485 130Q1495 80 1520 95M1485 120L1490 350Q1500 370 1510 345L1535 280M1490 655L1535 540L1555 590L1568 600M1500 645L1520 610Q1515 685 1528 685Q1540 670 1540 620L1565 640M1484 805H1568M1485 985Q1530 960 1545 1020Q1500 1040 1510 1100M1545 1030Q1520 1090 1568 1140M1490 1095V1125M1500 1095L1510 1125M1485 1195L1530 1240V1285L1495 1325M1568 1390Q1500 1370 1505 1410Q1540 1440 1568 1440M1520 1430L1545 1500
    M1485 2000L1568 2100M1490 2000L1510 2080`,
    dots: [[69, 8, 6], [143, 30, 13], [259, 45, 6], [397, 48, 6], [676, 30, 8], [716, 30, 8], [1435, 55, 6], [1487, 450, 10], [1565, 478, 6], [1490, 893, 9], [1565, 910, 13]],
  },
  {
    x: 240, y: 1740, kx: 1.5019, ky: 3,
    d: `M1515 85Q1520 50 1545 65L1568 100M1515 85L1545 180L1568 190M1525 120V150L1545 155M1494 220L1515 290L1540 220M1495 495Q1530 480 1568 500M1510 570L1525 530L1568 570M1510 570L1518 625L1568 655M1528 560V585L1540 590M1540 565L1535 610M1550 585Q1562 580 1558 600L1545 620L1562 630M1494 665Q1530 700 1568 780M1498 830Q1530 840 1568 820M1545 1020Q1530 1060 1545 1070Q1535 1110 1568 1100M1495 1120L1568 1240M1494 1390L1568 1310M1535 1320Q1535 1380 1568 1390M1535 1440L1550 1450L1540 1480L1555 1500`,
    dots: [[1527, 357, 6], [1502, 1024, 6], [1555, 924, 10]],
  },
  {
    x: 1234, y: 2240, kx: 3, ky: 3,
    d: `M150 0Q100 40 125 110M10 60Q40 110 90 130M20 50L30 60M10 120L50 130L40 200L10 210M20 220L50 230L45 250H60L30 310L20 270L5 265M150 560L90 520`,
    dots: [[110, 215, 7], [40, 345, 6], [55, 505, 10], [150, 390, 10], [45, 590, 6]],
  },
];

const Doodles = () => (
  <Wallpaper aria-hidden="true">
    <g transform="translate(0 -430)">
      {patches.map((p, i) => (
        <g key={i} transform={`translate(${p.x} ${p.y}) scale(${1 / p.kx} ${1 / p.ky})`}>
          <path d={p.d} />
          {p.dots.map(([x, y, r], j) => (
            <ellipse key={j} cx={x} cy={y} rx={r * p.kx} ry={r * p.ky} />
          ))}
        </g>
      ))}
    </g>
  </Wallpaper>
);

export default function App() {
  return (
    <Screen>
      <Global />
      <StatusBar>
        <Clock>5:18</Clock>
        <Moon width="42" height="42" viewBox="0 0 42 42" fill="#fff">
          <path d="M15 1C13 19 22 28 41 27C37 37 30 42 22 42C9 42 0 33 0 21C0 11 6 4 15 1Z" />
        </Moon>
        <StatusRight>
          <svg width="65" height="42" viewBox="0 0 65 42" fill="#fff">
            <rect x="0" y="25" width="11" height="16" rx="3" />
            <rect x="18" y="18" width="11" height="23" rx="3" />
            <rect x="36" y="9" width="11" height="32" rx="3" />
            <rect x="54" y="0" width="11" height="41" rx="3" fill="#414141" />
          </svg>
          <Network>4G</Network>
          <Battery>
            <BatteryBody>
              50
              <svg width="20" height="30" viewBox="0 0 20 30" fill="#fff">
                <path d="M15 0L0 17H8L5 30L20 12H12Z" />
              </svg>
            </BatteryBody>
            <BatteryTip />
          </Battery>
        </StatusRight>
      </StatusBar>

      <ContactBar>
        <BackButton type="button" aria-label="Atrás, 277">
          <svg width="32" height="56" viewBox="0 0 32 56" fill="none" stroke="#fff" strokeWidth="6.5" strokeLinecap="round" strokeLinejoin="round">
            <path d="M28 4L4 28L28 52" />
          </svg>
          277
        </BackButton>
        <Avatar>
          <svg width="34" height="36" viewBox="0 0 34 36" fill="#3ec6b0">
            <circle cx="17" cy="9" r="8.5" />
            <path d="M0 36Q1 21 17 21T34 36Z" />
          </svg>
        </Avatar>
        <Contact>+51 947 367 554</Contact>
        <Calls>
          <IconButton type="button" aria-label="Videollamada">
            <svg width="76" height="52" viewBox="0 0 76 52" fill="none" stroke="#fff" strokeWidth="4.5" strokeLinejoin="round">
              <rect x="2.5" y="2.5" width="53" height="47" rx="10" />
              <path d="M55.5 22L68 9.5Q73.5 6 73.5 12V40Q73.5 46 68 42.5L55.5 31" />
            </svg>
          </IconButton>
          <IconButton type="button" aria-label="Llamar">
            <svg width="60" height="61" viewBox="0 0 60 61" fill="none" stroke="#fff" strokeWidth="4.5" strokeLinejoin="round">
              <path d="M8 3.5C11 1.5 14 2 16 5L22 15C23.5 17.5 23 20 20.5 22L18 24C16.5 25.5 16.5 27 17.5 29C21 35 26 40 32 43C34 44 35.5 43.5 37 42L39.5 39C41 36.5 43.5 36 46 37.5L55 43C58 45 58.5 48 57 51C53 58 47 60 39 57.5C22 52 8 38 3 21C1 13 3 6.5 8 3.5Z" />
            </svg>
          </IconButton>
        </Calls>
      </ContactBar>

      <Pinned>
        <PinSteps>
          <PinStep />
          <PinStep $on />
        </PinSteps>
        <PinTile>
          <svg width="42" height="60" viewBox="0 0 42 60" fill="#a3a2ab">
            <path d="M6 0H36Q39 1 38 4Q35 9 29 12L30 24Q40 29 41 38Q41 41 38 41H23V55L21 60L19 55V41H3Q0 41 0 38Q2 29 12 24L13 12Q6 9 4 4Q3 1 6 0Z" />
          </svg>
        </PinTile>
        <PinText>600 SOLES POR ENTREGAR</PinText>
      </Pinned>

      <Chat>
        <Doodles />
        <Row $mine>
          <Bubble $mine>
            <Body>Ya entraron los 3</Body>
            <Meta $mine>5:13&#8239;p. m. <Ticks read /></Meta>
          </Bubble>
        </Row>
        <Row $mine>
          <Bubble $mine $stacked>
            <Body $stacked>{"Envíame BCP o BBVA cualquiera, me\nfacilitas si es BCP"}</Body>
            <Meta $mine>5:13&#8239;p. m. <Ticks read /></Meta>
            <TailR />
          </Bubble>
        </Row>
        <Row $turn>
          <Bubble>
            <Body>Ok ahí te envío</Body>
            <Meta>5:13&#8239;p. m.</Meta>
          </Bubble>
        </Row>
        <Row>
          <Bubble $stacked>
            <Body $stacked>
              {"Mi número de cuenta BCP Soles es\n"}
              <AccountLink href="tel:38006015652078">38006015652078</AccountLink>
              {".\nMi número de cuenta interbancaria es\n00238010601565207848."}
            </Body>
            <Meta>5:14&#8239;p. m.</Meta>
          </Bubble>
        </Row>
        <Row>
          <Bubble>
            <Body>Ahí está</Body>
            <Meta>5:14&#8239;p. m.</Meta>
            <TailL />
          </Bubble>
        </Row>
        <Row $mine $turn>
          <Share type="button" aria-label="Reenviar">
            <FaShare />
          </Share>
          <MediaBubble>
            <Receipt>
              <Logo>
                <Chevron />
                BCP
                <Chevron />
              </Logo>
              <ReceiptTitle>¡Transferencia exitosa!</ReceiptTitle>
              <Amount>S/ 600.00</Amount>
              <ReceiptDate>Miércoles, 08 Octubre 2025 - 05:17 p.m.</ReceiptDate>
              <Details>
                <Detail>
                  <Term>Enviado a</Term>
                  <Values>
                    <b>Anicama Perez Yeison J.</b>
                    <span>**** 2078</span>
                    <span>Moneda Soles</span>
                  </Values>
                </Detail>
                <Detail>
                  <Term>Desde</Term>
                  <Values>
                    <b>Cuenta Digital Soles</b>
                    <span>****8053</span>
                  </Values>
                </Detail>
                <Detail>
                  <Term>Número de operación</Term>
                  <Values>
                    <b>02891938</b>
                  </Values>
                </Detail>
              </Details>
              <Scallops />
            </Receipt>
            <Caption>
              <Body>
                {"Gracias por vender tus entradas\nconmigo "}
                <Emoji role="img" aria-label="manos levantadas" width="62" height="60" viewBox="0 0 62 60">
                  <g fill="#5c6660">
                    <path d="M10 10L14 2L17 9ZM23 1L27 0L28 9ZM35 0L39 1L34 9ZM45 9L49 2L52 10Z" />
                  </g>
                  <g fill="#ecc79c" stroke="#c99d6c" strokeWidth="1">
                    <path d="M6 59V46Q1 40 1 34L2 19Q4 16 6 19L7 30L8 15Q10 12 12 15V29L14 14Q16 12 18 15L17 30L19 19Q22 17 22 21L21 34L27 31Q31 32 28 36L19 46V59Z" />
                    <path d="M56 59V46Q61 40 61 34L60 19Q58 16 56 19L55 30L54 15Q52 12 50 15V29L48 14Q46 12 44 15L45 30L43 19Q40 17 40 21L41 34L35 31Q31 32 34 36L43 46V59Z" />
                  </g>
                </Emoji>
              </Body>
              <Meta $mine>5:17&#8239;p. m. <Ticks /></Meta>
            </Caption>
            <TailR />
          </MediaBubble>
        </Row>
      </Chat>

      <Composer>
        <IconButton type="button" aria-label="Adjuntar">
          <svg width="58" height="60" viewBox="0 0 58 60" stroke="#fff" strokeWidth="5.5" strokeLinecap="round">
            <path d="M29 3V57M3 30H55" />
          </svg>
        </IconButton>
        <Field>
          <Input type="text" aria-label="Mensaje" />
          <IconButton type="button" aria-label="Stickers">
            <svg width="54" height="56" viewBox="0 0 54 56" fill="none" stroke="#fff" strokeWidth="3.8" strokeLinejoin="round">
              <path d="M52 28C52 8 46 2 27 2S2 8 2 28S8 54 25 54C35 54 52 38 52 28Z" />
              <path d="M26 54C31 52 30 46 31 41C32 33 37 32 44 31C49 31 52 30 52 27" />
            </svg>
          </IconButton>
        </Field>
        <Tools>
          <IconButton type="button" aria-label="Cámara">
            <svg width="70" height="56" viewBox="0 0 70 56" fill="none" stroke="#fff" strokeWidth="4" strokeLinejoin="round">
              <path d="M7 10H18Q20 10 21 8L24 4Q26 2 29 2H41Q44 2 46 4L49 8Q50 10 52 10H63Q68 10 68 15V49Q68 54 63 54H7Q2 54 2 49V15Q2 10 7 10Z" />
              <circle cx="35" cy="30.5" r="14" />
              <circle cx="55" cy="20" r="3.6" fill="#fff" stroke="none" />
            </svg>
          </IconButton>
          <IconButton type="button" aria-label="Mensaje de voz">
            <svg width="48" height="70" viewBox="0 0 48 70" fill="none" stroke="#fff" strokeWidth="4.2" strokeLinecap="round">
              <rect x="13" y="2.5" width="22" height="46" rx="11" />
              <path d="M2.5 36Q3 58 24 59Q45 58 45.5 36M24 59V67.5" />
            </svg>
          </IconButton>
        </Tools>
      </Composer>
      <HomeBar />

      <StampLayer>
        {stamps.map(([x, y]) => (
          <Stamp key={`${x}-${y}`} x={x} y={y} />
        ))}
      </StampLayer>
    </Screen>
  );
}
